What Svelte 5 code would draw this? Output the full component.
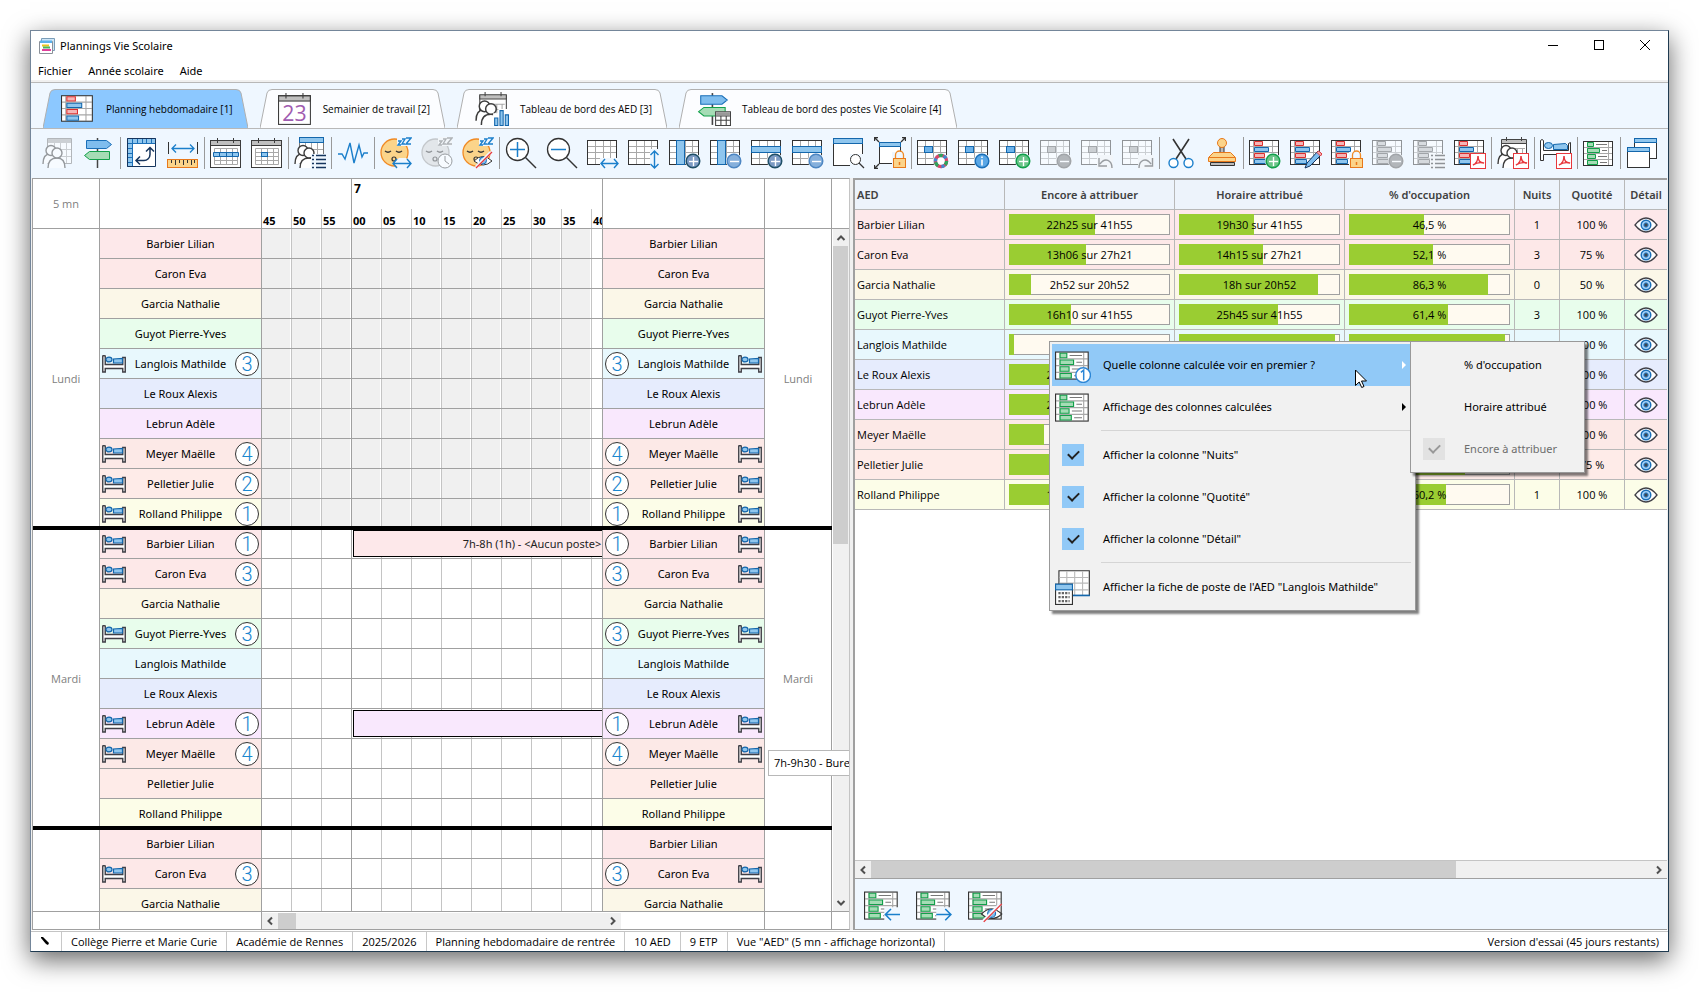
<script lang="ts">
	type Tool = { icon: string; label: string; off?: boolean };
	type Post = { from: number; minutes: number; text: string };
	type Day = { name: string; closed?: boolean; nights: Record<string, number>; posts?: Record<string, Post> };

	const people = [
		{ name: 'Barbier Lilian', color: '#fde8ea', left: '22h25 sur 41h55', leftPct: 53.5, done: '19h30 sur 41h55', donePct: 46.5, nights: 1, quota: 100 },
		{ name: 'Caron Eva', color: '#fde8e8', left: '13h06 sur 27h21', leftPct: 47.9, done: '14h15 sur 27h21', donePct: 52.1, nights: 3, quota: 75 },
		{ name: 'Garcia Nathalie', color: '#fbf7e8', left: '2h52 sur 20h52', leftPct: 13.7, done: '18h sur 20h52', donePct: 86.3, nights: 0, quota: 50 },
		{ name: 'Guyot Pierre-Yves', color: '#e8fdec', left: '16h10 sur 41h55', leftPct: 38.6, done: '25h45 sur 41h55', donePct: 61.4, nights: 3, quota: 100 },
		{ name: 'Langlois Mathilde', color: '#e8f8fd', left: '1h15 sur 41h55', leftPct: 3, done: '40h40 sur 41h55', donePct: 97, nights: 3, quota: 100 },
		{ name: 'Le Roux Alexis', color: '#e6ecfd', left: '23h10 sur 41h55', leftPct: 55.3, done: '18h45 sur 41h55', donePct: 44.7, nights: 0, quota: 100 },
		{ name: 'Lebrun Adèle', color: '#f9e8fd', left: '21h25 sur 41h55', leftPct: 51.1, done: '20h30 sur 41h55', donePct: 48.9, nights: 1, quota: 100 },
		{ name: 'Meyer Maëlle', color: '#fce9e7', left: '9h10 sur 41h55', leftPct: 21.9, done: '32h45 sur 41h55', donePct: 78.1, nights: 4, quota: 100 },
		{ name: 'Pelletier Julie', color: '#feebe8', left: '8h46 sur 31h26', leftPct: 28, done: '22h40 sur 31h26', donePct: 72, nights: 2, quota: 75 },
		{ name: 'Rolland Philippe', color: '#fcfde8', left: '16h41 sur 41h55', leftPct: 39.8, done: '25h14 sur 41h55', donePct: 60.2, nights: 1, quota: 100 }
	];

	const days: Day[] = [
		{
			name: 'Lundi',
			closed: true,
			nights: { 'Langlois Mathilde': 3, 'Meyer Maëlle': 4, 'Pelletier Julie': 2, 'Rolland Philippe': 1 }
		},
		{
			name: 'Mardi',
			nights: { 'Barbier Lilian': 1, 'Caron Eva': 3, 'Guyot Pierre-Yves': 3, 'Lebrun Adèle': 1, 'Meyer Maëlle': 4 },
			posts: {
				'Barbier Lilian': { from: 15, minutes: 60, text: '7h-8h (1h) - <Aucun poste>' },
				'Lebrun Adèle': { from: 15, minutes: 150, text: '' }
			}
		},
		{ name: '', nights: { 'Caron Eva': 3 } }
	];

	const slots = ['45', '50', '55', '00', '05', '10', '15', '20', '25', '30', '35', '40'];
	const slotWidth = 30;

	const tabs = [
		{ icon: 'sched', label: 'Planning hebdomadaire [1]' },
		{ icon: 'date', label: 'Semainier de travail [2]' },
		{ icon: 'people-chart', label: 'Tableau de bord des AED [3]' },
		{ icon: 'post-table', label: 'Tableau de bord des postes Vie Scolaire [4]' }
	];

	const toolGroups: Tool[][] = [
		[
			{ icon: 'people-grid', label: 'Vue AED', off: true },
			{ icon: 'post', label: 'Vue postes' }
		],
		[
			{ icon: 'swap', label: 'Inverser les axes' },
			{ icon: 'ruler', label: 'Échelle' }
		],
		[
			{ icon: 'cal-week', label: 'Semaine' },
			{ icon: 'cal-day', label: 'Jour' }
		],
		[{ icon: 'people-list', label: 'Liste des AED' }],
		[{ icon: 'pulse', label: 'Activité' }],
		[
			{ icon: 'nap-width', label: 'Largeur des nuits' },
			{ icon: 'nap-clock', label: 'Horaires des nuits', off: true },
			{ icon: 'nap-hide', label: 'Masquer les nuits' }
		],
		[
			{ icon: 'zoom-in', label: 'Zoom avant' },
			{ icon: 'zoom-out', label: 'Zoom arrière' },
			{ icon: 'grid-h', label: 'Ajuster en largeur' },
			{ icon: 'grid-v', label: 'Ajuster en hauteur' },
			{ icon: 'col-add', label: 'Élargir les colonnes' },
			{ icon: 'col-del', label: 'Réduire les colonnes' },
			{ icon: 'row-add', label: 'Agrandir les lignes' },
			{ icon: 'row-del', label: 'Réduire les lignes' },
			{ icon: 'win-find', label: 'Aperçu' },
			{ icon: 'win-lock', label: 'Verrouiller la taille' }
		],
		[
			{ icon: 'cell-color', label: 'Couleurs' },
			{ icon: 'cell-info', label: 'Informations' },
			{ icon: 'cell-add', label: 'Ajouter' },
			{ icon: 'cell-del', label: 'Supprimer', off: true },
			{ icon: 'cell-undo', label: 'Annuler', off: true },
			{ icon: 'cell-redo', label: 'Rétablir', off: true }
		],
		[
			{ icon: 'cut', label: 'Couper' },
			{ icon: 'stamp', label: 'Tampon' }
		],
		[
			{ icon: 'sched-add', label: 'Nouveau planning' },
			{ icon: 'sched-edit', label: 'Modifier le planning' },
			{ icon: 'sched-lock', label: 'Verrouiller le planning' },
			{ icon: 'sched-del', label: 'Supprimer le planning', off: true },
			{ icon: 'sched-list', label: 'Liste des plannings', off: true },
			{ icon: 'sched-pdf', label: 'Planning en PDF' }
		],
		[{ icon: 'people-pdf', label: 'AED en PDF' }],
		[{ icon: 'bed-pdf', label: 'Nuits en PDF' }],
		[{ icon: 'calc', label: 'Colonnes calculées' }],
		[{ icon: 'windows', label: 'Fenêtres' }]
	];

	const footTools: Tool[] = [
		{ icon: 'calc-left', label: 'Colonne précédente' },
		{ icon: 'calc-right', label: 'Colonne suivante' },
		{ icon: 'calc-hide', label: 'Masquer les colonnes' }
	];

	const status = [
		'Collège Pierre et Marie Curie',
		'Académie de Rennes',
		'2025/2026',
		'Planning hebdomadaire de rentrée',
		'10 AED',
		'9 ETP',
		'Vue "AED" (5 mn - affichage horizontal)'
	];

	let columns = $state([
		{ name: 'Nuits', shown: true },
		{ name: 'Quotité', shown: true },
		{ name: 'Détail', shown: true }
	]);

	let activeTab = $state(0);

	const percent = (n: number) => n.toFixed(1).replace('.', ',') + ' %';
</script>

{#snippet grid()}
	<g>
		<rect x="0.5" y="3.5" width="29" height="24" fill="#fff" />
		<path d="M8.5 4v23M16.5 4v23M23.5 4v23M1 9.5h28M1 15.5h28M1 21.5h28" stroke="#a8a8a8" />
		<rect x="0.5" y="3.5" width="29" height="24" stroke="#333" />
	</g>
{/snippet}

{#snippet sched()}
	<g>
		<rect x="0.5" y="3.5" width="29" height="24" fill="#fff" />
		<path d="M23.5 4v23M4.5 4v23M1 9.5h28M1 15.5h28M1 21.5h28" stroke="#a8a8a8" />
		<rect x="0.5" y="3.5" width="29" height="24" stroke="#333" />
		<path d="M5.5 4.5h8v4h-8zM5.5 16.5h10v4h-10z" fill="#f5b5b5" stroke="#dc2f2f" />
		<path d="M5.5 10.5h14v4h-14zM5.5 22.5h11v4h-11z" fill="#8fc6ee" stroke="#1467ac" />
	</g>
{/snippet}

{#snippet calc()}
	<g>
		<rect x="0.5" y="4.5" width="29" height="24" fill="#fff" />
		<path d="M4.5 5v23M25.5 5v23M1 10.5h28M1 16.5h28M1 22.5h28" stroke="#a8a8a8" />
		<rect x="0.5" y="4.5" width="29" height="24" stroke="#333" />
		<path d="M4.5 5.5h6v4h-6zM4.5 11.5h12v4h-12zM4.5 17.5h8v4h-8zM4.5 23.5h10v4h-10z" fill="#a5dcb5" stroke="#12a04a" />
		<path d="M13 7.5h11M19 13.5h5M15 19.5h9M17 25.5h7" stroke="#777" />
	</g>
{/snippet}

{#snippet crew()}
	<g stroke="#3c3c3c" stroke-width="1.4" fill="#fff">
		<path d="M1 27c0-6 2-10 7-10s6 3 6 8" />
		<circle cx="9" cy="13.5" r="5" />
		<path d="M6 31c0-7 3-10 9-10s8 4 8 10" />
		<circle cx="15" cy="16" r="5" />
	</g>
{/snippet}

{#snippet calendar()}
	<g>
		<rect x="0.5" y="3.5" width="30" height="27" fill="#fff" />
		<rect x="0.5" y="3.5" width="30" height="5" fill="#bfbfbf" stroke="#3c3c3c" />
		<rect x="0.5" y="3.5" width="30" height="27" stroke="#3c3c3c" />
		<path d="M7.5 1v5M23.5 1v5" stroke="#3c3c3c" />
	</g>
{/snippet}

{#snippet signpost()}
	<g>
		<path d="M14.5 1v30" stroke="#444" stroke-width="1.5" />
		<path d="M3.5 3.5h20l5 4-5 4h-20z" fill="#7fbdee" stroke="#1a6fb8" />
		<path d="M26.5 14.5h-20l-5 4 5 4h20z" fill="#a5dcb5" stroke="#12a04a" />
	</g>
{/snippet}

{#snippet face()}
	<g>
		<circle cx="14.5" cy="15.5" r="13.5" fill="#fbd48a" stroke="#f08a24" stroke-width="1.3" />
		<path d="M5 14q3 2.5 6 0M16 14q3 2.5 6 0" stroke="#333" stroke-width="1.3" />
		<circle cx="14" cy="22" r="2" stroke="#333" stroke-width="1.2" />
		<path d="M17 0h14v9H17z" fill="#eff7ff" />
		<path d="M18 4h3l-3 4h3M22 2h3l-3 5h3M26 1h5l-5 6h5" stroke="#1b7fcb" stroke-width="1.4" />
	</g>
{/snippet}

{#snippet badge(sign: string, fill: string, edge: string)}
	<g>
		<circle cx="24" cy="24" r="8" fill="#eff7ff" />
		<circle cx="24" cy="24" r="6.8" {fill} stroke={edge} stroke-width="1.4" />
		{#if sign === 'info'}
			<path d="M24 19.5v1.5M24 22.5v6" stroke="#fff" stroke-width="1.6" />
		{:else}
			<path d="M20 24.5h9" stroke="#fff" stroke-width="1.4" />
			{#if sign === 'plus'}
				<path d="M24.5 20v9" stroke="#fff" stroke-width="1.4" />
			{/if}
		{/if}
	</g>
{/snippet}

{#snippet padlock()}
	<g>
		<rect x="18" y="15" width="14" height="17" fill="#eff7ff" />
		<path d="M21.5 22v-4a4 4 0 0 1 8 0v4" stroke="#f08a24" stroke-width="1.3" />
		<rect x="19.5" y="21.5" width="12" height="9" fill="#fbd48a" stroke="#e8781a" />
		<path d="M25.5 25v3" stroke="#e8781a" stroke-width="1.5" />
	</g>
{/snippet}

{#snippet pdf()}
	<g>
		<rect x="16.5" y="16.5" width="15" height="15" fill="#fff" stroke="#e8383d" />
		<path d="M19 28c3-1 5-5 5-9 0 4 2 7 6 7-3-1-8 0-11 2z" stroke="#e8383d" stroke-width="1.5" />
	</g>
{/snippet}

{#snippet lines()}
	<g>
		<rect x="17" y="17" width="15" height="15" fill="#eff7ff" />
		<path d="M18 18.5h2M18 22.5h2M18 26.5h2M18 30.5h2M22 18.5h10M22 22.5h10M22 26.5h10M22 30.5h10" stroke="#15355e" stroke-width="1.5" />
	</g>
{/snippet}

{#snippet crossedEye()}
	<g>
		<path d="M12 24q8.500-9 18 0q-8.500 8-18 0z" fill="#fff" stroke="#333" />
		<circle cx="21" cy="23.5" r="3.500" fill="#7fbdee" stroke="#1a6fb8" />
		<circle cx="21" cy="23.5" r="1" fill="#333" />
		<path d="M14 30L29 15" stroke="#eff7ff" stroke-width="3" />
		<path d="M14 31L30 15" stroke="#e8383d" stroke-width="1.2" />
	</g>
{/snippet}

{#snippet icon(name: string)}
	<svg class="icon" viewBox="0 0 32 32" fill="none" aria-hidden="true">
		{#if name === 'people-grid'}
			<g>
				<path d="M5.5 1.5h24v25h-24z" fill="#fff" stroke="#777" />
				<path d="M6 2h23v4h-23z" fill="#aaa" />
				<path d="M12.5 6v20M18.5 6v20M24.5 6v20M6 12.5h23M6 19.5h23" stroke="#a8a8a8" />
			</g>
			{@render crew()}
		{:else if name === 'post' || name === 'post-table'}
			{@render signpost()}
			{#if name === 'post-table'}
				<g>
					<path d="M17.5 18.5h14v13h-14z" fill="#fff" stroke="#444" />
					<path d="M18 19h13v3h-13z" fill="#999" />
					<path d="M22.5 22v9M27.5 22v9M18 22.5h13M18 26.5h13" stroke="#444" />
				</g>
			{/if}
		{:else if name === 'swap'}
			<path d="M1.5 1.5h28v28h-28z" fill="#fff" />
			<path d="M1.5 1.5h28v5h-28zM1.5 6.5h5v23h-5z" fill="#8fc6ee" stroke="#1a6fb8" />
			<path d="M6.5 2v4M11.5 2v4M16.5 2v4M20.5 2v4M25.5 2v4M2 11.5h4M2 16.5h4M2 20.5h4M2 25.5h4" stroke="#1a6fb8" />
			<path d="M1.5 1.5h28v28h-28z" stroke="#15355e" />
			<path d="M10 23.5h8a6 6 0 0 0 6-6V11M14 19.5l-4 4 4 4M20 14.5l4-4 4 4" stroke="#15355e" stroke-width="1.5" />
		{:else if name === 'ruler'}
			<path d="M1.5 5v12M30.5 5v12" stroke="#333" />
			<path d="M5 11.5h22M9 7.5l-4 4 4 4M23 7.5l4 4-4 4" stroke="#1b7fcb" stroke-width="1.3" />
			<rect x="0.5" y="22.5" width="30" height="8" fill="#fbd48a" stroke="#e8781a" />
			<path d="M4.5 23v3M8.5 23v5M12.5 23v3M16.5 23v5M20.5 23v3M24.5 23v5M27.5 23v3" stroke="#333" />
		{:else if name === 'cal-week' || name === 'cal-day'}
			{@render calendar()}
			<path d="M4.5 11.5h23v16h-23zM10.5 11v17M16.5 11v17M22.5 11v17M4 15.5h24M4 19.5h24M4 23.5h24" stroke="#a8a8a8" />
			{#if name === 'cal-week'}
				<path d="M3.5 15.5h25v4h-25zM9.5 16v4M16.5 16v4M22.5 16v4" fill="#8fc6ee" stroke="#1467ac" />
			{:else}
				<rect x="10.5" y="15.5" width="6" height="4" fill="#8fc6ee" stroke="#1467ac" />
			{/if}
		{:else if name === 'people-list'}
			<path d="M5.5 1.5h24v25h-24z" fill="#fff" stroke="#777" />
			<path d="M11.5 6v20M17.5 6v20M23.5 6v20M6 12.5h23M6 19.5h23" stroke="#a8a8a8" />
			<rect x="5.5" y="0.5" width="24" height="5" fill="#8fc6ee" stroke="#1467ac" />
			{@render crew()}
			{@render lines()}
		{:else if name === 'pulse'}
			<path d="M1 17h4l3 5 5-16 4 20 5-18 3 12 2-4h4" stroke="#1b7fcb" stroke-width="1.4" />
		{:else if name === 'nap-width'}
			{@render face()}
			<path d="M13 26l6-5h7l6 5-6 5h-7z" fill="#eff7ff" />
			<path d="M13 26.5h18M17 22l-4 4.5 4 4.5M27 22l4 4.5-4 4.5" stroke="#1b7fcb" stroke-width="1.4" />
		{:else if name === 'nap-clock'}
			{@render face()}
			<circle cx="24" cy="24" r="7" fill="#fff" stroke="#444" />
			<path d="M24 19v5l4 3" stroke="#444" />
		{:else if name === 'nap-hide'}
			{@render face()}
			{@render crossedEye()}
		{:else if name === 'zoom-in' || name === 'zoom-out'}
			<circle cx="12.5" cy="12.5" r="11" fill="#fff" stroke="#333" stroke-width="1.3" />
			<path d="M20.5 20.5L31 31" stroke="#333" stroke-width="1.4" />
			<path d="M5 12.5h15" stroke="#1b7fcb" stroke-width="1.5" />
			{#if name === 'zoom-in'}
				<path d="M12.5 5v15" stroke="#1b7fcb" stroke-width="1.5" />
			{/if}
		{:else if name === 'grid-h'}
			{@render grid()}
			<path d="M13 21h19v10H13z" fill="#eff7ff" />
			<path d="M14 26.5h17M18 22l-4 4.5 4 4.5M27 22l4 4.5-4 4.5" stroke="#1b7fcb" stroke-width="1.4" />
		{:else if name === 'grid-v'}
			{@render grid()}
			<path d="M22 12h9v20h-9z" fill="#eff7ff" />
			<path d="M26.5 14v17M22.5 18l4-4 4 4M22.5 27l4 4 4-4" stroke="#1b7fcb" stroke-width="1.4" />
		{:else if name === 'col-add' || name === 'col-del'}
			{@render grid()}
			<rect x="7.5" y="3.5" width="8" height="24" fill="#8fc6ee" stroke="#1467ac" />
			{#if name === 'col-add'}
				{@render badge('plus', '#7d9bc4', '#1f4f66')}
			{:else}
				{@render badge('minus', '#86b0dc', '#4d86c2')}
			{/if}
		{:else if name === 'row-add' || name === 'row-del'}
			{@render grid()}
			<rect x="0.5" y="9.5" width="29" height="6" fill="#8fc6ee" stroke="#1467ac" />
			{#if name === 'row-add'}
				{@render badge('plus', '#7d9bc4', '#1f4f66')}
			{:else}
				{@render badge('minus', '#86b0dc', '#4d86c2')}
			{/if}
		{:else if name === 'win-find'}
			<rect x="0.5" y="1.5" width="29" height="27" fill="#fff" stroke="#333" />
			<rect x="0.5" y="1.5" width="29" height="5" fill="#8fc6ee" stroke="#1467ac" />
			<path d="M17 17h15v15H17z" fill="#eff7ff" />
			<circle cx="22.5" cy="22.5" r="5" fill="#fff" stroke="#333" />
			<path d="M26 26l5 5" stroke="#333" stroke-width="1.3" />
		{:else if name === 'win-lock'}
			<rect x="5.5" y="5.5" width="21" height="21" fill="#fff" stroke="#333" />
			<rect x="5.5" y="5.5" width="21" height="4" fill="#8fc6ee" stroke="#1467ac" />
			<path d="M0.5 4V0.5H4M28 0.5h3.5V4M0.5 28v3.5H4M1 1l4 4M31 1l-4 4M1 31l4-4" stroke="#333" stroke-width="1.3" />
			{@render padlock()}
		{:else if name.startsWith('cell')}
			{@render grid()}
			<rect x="7.5" y="9.5" width="8" height="6" fill="#6db3ea" stroke="#1467ac" />
			{#if name === 'cell-color'}
				<circle cx="24" cy="24" r="8" fill="#eff7ff" />
				<circle cx="24" cy="24" r="5.5" stroke="#d9486b" stroke-width="3.5" />
				<circle cx="24" cy="24" r="5.5" stroke="#2fa35c" stroke-width="3.5" stroke-dasharray="4 7.5" />
				<circle cx="24" cy="24" r="5.5" stroke="#3f8ad0" stroke-width="3.5" stroke-dasharray="3 8.5" stroke-dashoffset="-5" />
				<circle cx="24" cy="24" r="3.5" fill="#fff" />
			{:else if name === 'cell-info'}
				{@render badge('info', '#5aa7e6', '#1a6fb8')}
			{:else if name === 'cell-add'}
				{@render badge('plus', '#6cc58a', '#12a04a')}
			{:else if name === 'cell-del'}
				{@render badge('minus', '#777', '#555')}
			{:else if name === 'cell-undo'}
				<path d="M16 18h16v14H16z" fill="#eff7ff" />
				<path d="M31 31c0-8-7-11-12-4M18 21v8h8" stroke="#444" stroke-width="1.4" />
			{:else}
				<path d="M16 18h16v14H16z" fill="#eff7ff" />
				<path d="M17 31c0-8 7-11 12-4M30.5 21v8h-8" stroke="#444" stroke-width="1.4" />
			{/if}
		{:else if name === 'cut'}
			<path d="M8 2l13 20M24 2L11 22" stroke="#333" stroke-width="1.6" />
			<circle cx="8.5" cy="26" r="4.5" fill="#fff" stroke="#1b7fcb" stroke-width="1.4" />
			<circle cx="23.5" cy="26" r="4.5" fill="#fff" stroke="#1b7fcb" stroke-width="1.4" />
		{:else if name === 'stamp'}
			<path d="M4.5 25.5h24v3h-24z" fill="#bbb" stroke="#333" />
			<path d="M14 10h4v7h-4z" fill="#bbb" stroke="#333" />
			<path d="M2.5 24.5v-4l5-5h17l5 5v4zM3 20.5h26" fill="#fbd48a" stroke="#e8781a" />
			<circle cx="16" cy="6" r="4.5" fill="#fbd48a" stroke="#e8781a" />
		{:else if name.startsWith('sched')}
			{@render sched()}
			{#if name === 'sched-add'}
				{@render badge('plus', '#6cc58a', '#12a04a')}
			{:else if name === 'sched-edit'}
				<path d="M15 31l2-5L28 14l4 3-12 12z" fill="#7fbdee" stroke="#15355e" />
				<path d="M27 15.5l1.5-1.5 3.5 3-1.5 2z" fill="#f5b5b5" stroke="#e8383d" />
			{:else if name === 'sched-lock'}
				{@render padlock()}
			{:else if name === 'sched-del'}
				{@render badge('minus', '#777', '#555')}
			{:else if name === 'sched-list'}
				{@render lines()}
			{:else if name === 'sched-pdf'}
				{@render pdf()}
			{/if}
		{:else if name === 'people-pdf' || name === 'people-chart'}
			<path d="M4.5 3.5h25v22h-25z" fill="#fff" stroke="#444" />
			<path d="M20.5 12v12M25.5 12v12M16 11.5h12M16 16.5h12" stroke="#a8a8a8" />
			<path d="M4.5 2.5h25v4h-25z" fill="#bfbfbf" stroke="#444" />
			<path d="M9.5 0v4M24.5 0v4" stroke="#444" />
			{@render crew()}
			{#if name === 'people-pdf'}
				{@render pdf()}
			{:else}
				<path d="M17 20h5v-4h10v16H17z" fill="#fff" />
				<path d="M18.5 24.5h3v7h-3zM23.5 17.5h3v14h-3zM28.5 21.5h3v10h-3z" fill="#8fc6ee" stroke="#1467ac" />
			{/if}
		{:else if name === 'bed-pdf'}
			<path d="M0.5 23.5v-20l1.5-1 1.5 1v10h25v-7l2-1v18h-2v-6h-25v6z" fill="#fff" stroke="#333" />
			<ellipse cx="8.5" cy="8.5" rx="4" ry="3" fill="#8fc6ee" stroke="#1467ac" />
			<path d="M13.5 12.5v-5l12-1 2 2v4z" fill="#8fc6ee" stroke="#1467ac" />
			{@render pdf()}
		{:else if name === 'windows'}
			<rect x="8.5" y="1.5" width="22" height="20" fill="#fff" stroke="#333" />
			<rect x="8.5" y="1.5" width="22" height="4" fill="#8fc6ee" stroke="#1467ac" />
			<rect x="1.5" y="10.5" width="22" height="20" fill="#fff" stroke="#333" />
			<rect x="1.5" y="10.5" width="22" height="4" fill="#8fc6ee" stroke="#1467ac" />
		{:else if name === 'date'}
			{@render calendar()}
			<text x="15.5" y="27" text-anchor="middle" font-size="20" font-family="Open Sans, sans-serif" fill="#a05cb0">23</text>
		{:else if name === 'sheet'}
			<path d="M3.5 1.5h27v22h-27z" fill="#fff" stroke="#333" />
			<path d="M10.5 2v21M17.5 2v21M24.5 2v21M4 7.5h26M4 12.5h26M4 18.5h26" stroke="#bbb" />
			<path d="M16 23.5h15" stroke="#1467ac" stroke-width="1.5" />
			<rect x="0.5" y="13.5" width="15" height="18" fill="#fff" stroke="#333" />
			<rect x="0.5" y="13.5" width="15" height="5" fill="#8fc6ee" stroke="#1467ac" />
			<path d="M3 21.5h10M3 25h10M3 28.5h10" stroke="#666" stroke-width="2" stroke-dasharray="2 1" />
		{:else if name.startsWith('calc')}
			{@render calc()}
			{#if name === 'calc-left'}
				<path d="M18 18h14v12H18z" fill="#eff7ff" />
				<path d="M32 24.5H19M24 19.5l-5 5 5 5" stroke="#1b7fcb" stroke-width="1.4" />
			{:else if name === 'calc-right'}
				<path d="M18 18h14v12H18z" fill="#eff7ff" />
				<path d="M18 24.5h13M26 19.5l5 5-5 5" stroke="#1b7fcb" stroke-width="1.4" />
			{:else if name === 'calc-hide'}
				{@render crossedEye()}
			{:else if name === 'calc-first'}
				<circle cx="25" cy="25" r="6.5" fill="#fff" stroke="#2c86d6" stroke-width="1.3" />
				<path d="M23 22.5l2.5-2v9" stroke="#2c86d6" stroke-width="1.3" />
			{/if}
		{/if}
	</svg>
{/snippet}

{#snippet bed()}
	<svg class="bed" viewBox="0 0 24 18" fill="none" aria-hidden="true">
		<path d="M0.75 17V1l1-.5 1.5.5v8.5h17.5V2.5h2.5V17h-2.5v-3.5H3.25V17z" fill="#fff" stroke="#3f3f46" stroke-width="1.4" />
		<ellipse cx="7" cy="4.5" rx="3" ry="2.4" fill="#8fc6ee" stroke="#1467ac" stroke-width="1.2" />
		<path d="M11.5 8V4l9-.5V8z" fill="#8fc6ee" stroke="#1467ac" stroke-width="1.2" />
	</svg>
{/snippet}

{#snippet eye()}
	<svg class="eye" viewBox="0 0 24 16" fill="none" aria-hidden="true">
		<path d="M1 8Q12-6 23 8Q12 22 1 8z" fill="#fff" stroke="#3f3f46" stroke-width="1.3" />
		<circle cx="12" cy="8" r="4.8" fill="#a8d2f5" stroke="#1a6fb8" stroke-width="1.4" />
		<circle cx="12" cy="8" r="2.2" fill="#3c4650" stroke="#2c86d6" />
	</svg>
{/snippet}

{#snippet chevron(turn: string)}
	<svg class="chevron {turn}" viewBox="0 0 10 10" fill="none" aria-hidden="true">
		<path d="M1.5 7L5 3.5 8.5 7" stroke="#505050" stroke-width="2" />
	</svg>
{/snippet}

{#snippet person(name: string, color: string, night: number | undefined, mirrored: boolean)}
	<div class="person" class:mirrored style:background={color}>
		<span class="mark">{#if night}{@render bed()}{/if}</span>
		<span class="who">{name}</span>
		<span class="mark">
			{#if night}<b class="night">{night}</b>{/if}
		</span>
	</div>
{/snippet}

{#snippet gauge(text: string, value: number)}
	<div class="gauge">
		<div class="fill" style:width="{value}%"></div>
		<span>{text}</span>
	</div>
{/snippet}

<div class="desktop">
	<div class="window">
		<header class="titlebar">
			<svg class="logo" viewBox="0 0 16 16" fill="none" aria-hidden="true">
				<path d="M2.5 0.5h13v12h-13z" fill="#cfe6f7" stroke="#7a9db8" />
				<path d="M0.5 3.5h13v12h-13z" fill="#fff" stroke="#8a9099" />
				<path d="M1 2.5h12v2.5H1z" fill="#5ab0ea" />
				<path d="M3 7.5h7" stroke="#e8c51c" stroke-width="2" />
				<path d="M4 9.5h7" stroke="#4ab35c" stroke-width="2" />
				<path d="M3 12h9" stroke="#e0409a" stroke-width="2" />
			</svg>
			<h1>Plannings Vie Scolaire</h1>
			<div class="controls">
				<button type="button" aria-label="Réduire"><svg viewBox="0 0 10 10"><path d="M0 5.5h10" stroke="#000" /></svg></button>
				<button type="button" aria-label="Agrandir"><svg viewBox="0 0 10 10"><path d="M0.5 0.5h9v9h-9z" fill="none" stroke="#000" /></svg></button>
				<button type="button" aria-label="Fermer"><svg viewBox="0 0 10 10"><path d="M0 0l10 10M10 0L0 10" stroke="#000" /></svg></button>
			</div>
		</header>

		<nav class="menubar">
			<button type="button">Fichier</button>
			<button type="button">Année scolaire</button>
			<button type="button">Aide</button>
		</nav>

		<div class="tabs" role="tablist">
			{#each tabs as tab, i (tab.label)}
				<button type="button" role="tab" class="tab" class:active={i === activeTab} aria-selected={i === activeTab} onclick={() => (activeTab = i)}>
					<svg class="edge" viewBox="0 0 12 39" aria-hidden="true"><path d="M0 39L7 4Q8 .5 12 .5V39z" /><path class="rim" d="M0 39L7 4Q8 .5 12 .5" /></svg>
					<span class="tab-body">{@render icon(tab.icon)}{tab.label}</span>
					<svg class="edge" viewBox="0 0 12 39" aria-hidden="true"><path d="M12 39L5 4Q4 .5 0 .5V39z" /><path class="rim" d="M12 39L5 4Q4 .5 0 .5" /></svg>
				</button>
			{/each}
		</div>

		<div class="toolbar" role="toolbar">
			{#each toolGroups as group}
				<div class="group">
					{#each group as tool (tool.icon)}
						<button type="button" class="tool" aria-label={tool.label} disabled={tool.off}>{@render icon(tool.icon)}</button>
					{/each}
				</div>
			{/each}
		</div>

		<div class="panes">
			<section class="planner">
				<div class="cols head">
					<div class="cell muted">5 mn</div>
					<div class="cell"></div>
					<div class="cell scale">
						{#each slots as slot, i}
							<div class="slot" class:before-hour={slots[i + 1] === '00'}>
								<b class="hour">{slot === '00' ? '7' : ''}</b>
								<b class="minute">{slot}</b>
							</div>
						{/each}
					</div>
					<div class="cell"></div>
					<div class="cell"></div>
					<div></div>
				</div>

				<div class="body">
					<div class="days">
						{#each days as day}
							<div class="day">
								<div class="cell muted">{day.name}</div>
								<div class="cell stack">
									{#each people as p (p.name)}
										{@render person(p.name, p.color, day.nights[p.name], false)}
									{/each}
								</div>
								<div class="cell stack">
									{#each people as p (p.name)}
										{@const post = day.posts?.[p.name]}
										<div class="lane" class:closed={day.closed}>
											{#if post}
												<div
													class="post"
													style:margin-left="{(post.from / 5) * slotWidth + 1}px"
													style:width="{(post.minutes / 5) * slotWidth - 2}px"
													style:background={p.color}
												>
													{post.text}
												</div>
											{/if}
										</div>
									{/each}
								</div>
								<div class="cell stack">
									{#each people as p (p.name)}
										{@render person(p.name, p.color, day.nights[p.name], true)}
									{/each}
								</div>
								<div class="cell muted">{day.name}</div>
							</div>
						{/each}
					</div>
					<div class="vscroll">
						<button type="button" aria-label="Monter">{@render chevron('up')}</button>
						<div class="track"><div class="thumb"></div></div>
						<button type="button" aria-label="Descendre">{@render chevron('down')}</button>
					</div>
					<div class="hint">7h-9h30 - Bureau</div>
				</div>

				<div class="cols foot">
					<div class="cell"></div>
					<div class="cell"></div>
					<div class="hscroll">
						<button type="button" aria-label="Gauche">{@render chevron('left')}</button>
						<div class="track"><div class="thumb"></div></div>
						<button type="button" aria-label="Droite">{@render chevron('right')}</button>
					</div>
					<div class="cell"></div>
					<div class="cell"></div>
					<div></div>
				</div>
			</section>

			<section class="summary">
				<div class="table-area">
					<table>
						<colgroup>
							<col class="c-name" /><col /><col /><col /><col class="c-nights" /><col class="c-quota" /><col class="c-detail" />
						</colgroup>
						<thead>
							<tr>
								<th>AED</th>
								<th>Encore à attribuer</th>
								<th>Horaire attribué</th>
								<th>% d'occupation</th>
								<th>Nuits</th>
								<th>Quotité</th>
								<th>Détail</th>
							</tr>
						</thead>
						<tbody>
							{#each people as p (p.name)}
								<tr style:background={p.color}>
									<td>{p.name}</td>
									<td>{@render gauge(p.left, p.leftPct)}</td>
									<td>{@render gauge(p.done, p.donePct)}</td>
									<td>{@render gauge(percent(p.donePct), p.donePct)}</td>
									<td>{p.nights}</td>
									<td>{p.quota} %</td>
									<td><button type="button" class="look" aria-label="Détail de {p.name}">{@render eye()}</button></td>
								</tr>
							{/each}
						</tbody>
					</table>
				</div>
				<div class="hscroll wide">
					<button type="button" aria-label="Gauche">{@render chevron('left')}</button>
					<div class="track"><div class="thumb"></div></div>
					<button type="button" aria-label="Droite">{@render chevron('right')}</button>
				</div>
				<div class="actions">
					{#each footTools as tool (tool.icon)}
						<button type="button" aria-label={tool.label}>{@render icon(tool.icon)}</button>
					{/each}
				</div>
			</section>
		</div>

		<footer class="status">
			<span class="state">
				<svg viewBox="0 0 10 10" aria-hidden="true"><path d="M1 1l2 0 6 6-1 2-2-1-5-6z" fill="#000" /></svg>
			</span>
			{#each status as item}
				<span>{item}</span>
			{/each}
			<span class="licence">Version d'essai (45 jours restants)</span>
		</footer>

		<div class="popup menu" role="menu">
			<button type="button" role="menuitem" class="item current">
				<span class="gutter">{@render icon('calc-first')}</span>
				<span class="text">Quelle colonne calculée voir en premier ?</span>
				<span class="arrow"></span>
			</button>
			<button type="button" role="menuitem" class="item">
				<span class="gutter">{@render icon('calc')}</span>
				<span class="text">Affichage des colonnes calculées</span>
				<span class="arrow"></span>
			</button>
			<hr />
			{#each columns as column (column.name)}
				<label class="item">
					<span class="gutter"><input type="checkbox" bind:checked={column.shown} /></span>
					<span class="text">Afficher la colonne "{column.name}"</span>
				</label>
			{/each}
			<hr />
			<button type="button" role="menuitem" class="item">
				<span class="gutter">{@render icon('sheet')}</span>
				<span class="text">Afficher la fiche de poste de l'AED "Langlois Mathilde"</span>
			</button>
		</div>

		<div class="popup submenu" role="menu">
			<button type="button" role="menuitem" class="item"><span class="gutter"></span><span class="text">% d'occupation</span></button>
			<button type="button" role="menuitem" class="item"><span class="gutter"></span><span class="text">Horaire attribué</span></button>
			<label class="item disabled">
				<span class="gutter"><input type="checkbox" checked disabled /></span>
				<span class="text">Encore à attribuer</span>
			</label>
		</div>

		<svg class="cursor" viewBox="0 0 12 19" aria-hidden="true">
			<path d="M.5 1v15.5l3.7-3.5 2.5 5.5 2.3-1-2.5-5.5h5z" fill="#fff" stroke="#000" />
		</svg>
	</div>
</div>

<style>
	:global(body) {
		background: #fff;
	}

	.desktop,
	.desktop :global(*) {
		box-sizing: border-box;
	}

	.desktop {
		--line: #a0a0a0;
		--line-soft: #c4c4c4;
		--bar: #eff7ff;
		height: 100vh;
		padding: 30px 30px 40px;
		overflow: hidden;
		font-family: 'Open Sans', 'Noto Sans', sans-serif;
		font-size: 11px;
		line-height: 16px;
		color: #000;
	}

	button {
		padding: 0;
		border: 0;
		background: none;
		font: inherit;
		color: inherit;
	}

	.window {
		position: relative;
		display: flex;
		flex-direction: column;
		height: 100%;
		border: 1px solid #1f3a50;
		border-top-color: #74869a;
		border-left-color: #74869a;
		background: #fff;
		box-shadow: 0 8px 24px rgba(0, 0, 0, 0.6);
	}

	.titlebar {
		display: flex;
		align-items: center;
		height: 30px;
		padding-left: 8px;
	}

	.logo {
		width: 16px;
		height: 16px;
	}

	h1 {
		flex: 1;
		margin: 0 0 0 5px;
		font-family: 'Noto Sans', sans-serif;
		font-size: 11px;
		font-weight: 400;
	}

	.controls {
		display: flex;
	}

	.controls button {
		width: 46px;
		height: 30px;
	}

	.controls svg {
		width: 10px;
		height: 10px;
		shape-rendering: crispEdges;
	}

	.menubar {
		display: flex;
		gap: 16px;
		height: 21px;
		padding-left: 7px;
		font-family: 'Noto Sans', sans-serif;
		border-bottom: 2px solid #f0f0f0;
	}

	.tabs {
		display: flex;
		align-items: flex-end;
		gap: 12px;
		height: 47px;
		padding-left: 12px;
		border-top: 1px solid #b8b8b8;
		border-bottom: 1px solid #b8b8b8;
		background: var(--bar);
	}

	.tab {
		--tab: #fcfdff;
		display: flex;
		height: 39px;
		font-size: 10px;
	}

	.tab.active {
		--tab: #8cc8ff;
	}

	.edge {
		width: 12px;
		height: 39px;
		fill: var(--tab);
	}

	.rim {
		fill: none;
		stroke: #b0b0b0;
	}

	.tab-body {
		display: flex;
		align-items: center;
		gap: 11px;
		height: 39px;
		padding: 0 3px 0 6px;
		border-top: 1px solid #b0b0b0;
		background: var(--tab);
	}

	.tab-body .icon {
		width: 34px;
		height: 34px;
	}

	.icon {
		width: 32px;
		height: 32px;
		flex: none;
	}

	.toolbar {
		display: flex;
		height: 49px;
		padding: 8px 0 0 7px;
		background: var(--bar);
	}

	.group {
		display: flex;
		height: 32px;
	}

	.group + .group {
		padding-left: 1px;
		border-left: 1px solid #999;
	}

	.tool {
		width: 41px;
		height: 32px;
		padding-left: 4px;
		text-align: left;
	}

	.tool:disabled {
		filter: grayscale(1);
		opacity: 0.5;
	}

	.panes {
		flex: 1;
		display: grid;
		grid-template-rows: minmax(0, 1fr);
		grid-template-columns: minmax(0, 818fr) minmax(0, 814fr);
		gap: 3px;
		min-height: 0;
		padding: 0 1px;
		background: #f0f0f0;
	}

	.planner {
		display: grid;
		grid-template-rows: 50px minmax(0, 1fr) 17px;
		min-width: 0;
		border: 1px solid var(--line);
		border-right-color: var(--line-soft);
		background: #fff;
	}

	.cols {
		display: grid;
		grid-template-columns: 67px 162px minmax(0, 1fr) 162px 67px 17px;
	}

	.cell {
		min-width: 0;
		border-right: 1px solid var(--line);
	}

	.muted {
		display: flex;
		align-items: center;
		justify-content: center;
		color: #808080;
	}

	.head {
		border-bottom: 1px solid var(--line);
	}

	.scale {
		display: flex;
		overflow: hidden;
	}

	.slot {
		flex: none;
		display: flex;
		flex-direction: column;
		justify-content: space-between;
		width: 30px;
	}

	.hour {
		height: 16px;
		padding: 2px 0 0 2px;
		font-size: 12px;
	}

	.minute {
		height: 19px;
		padding: 4px 0 0 1px;
		border-right: 1px solid var(--line-soft);
		line-height: 16px;
	}

	.before-hour {
		border-right: 1px solid var(--line);
	}

	.before-hour .minute {
		border-right: 0;
	}

	.body {
		position: relative;
		display: grid;
		grid-template-rows: minmax(0, 1fr);
		grid-template-columns: minmax(0, 1fr) 17px;
		overflow: hidden;
		border-bottom: 1px solid var(--line);
	}

	.day {
		position: relative;
		display: grid;
		grid-template-columns: 67px 162px minmax(0, 1fr) 162px 67px;
	}

	/* heavy rule straddling the last row line of the day */
	.day::after {
		content: '';
		position: absolute;
		right: 0;
		bottom: -1px;
		left: 0;
		z-index: 1;
		height: 4px;
		background: #000;
	}

	.stack {
		overflow: hidden;
	}

	.person {
		display: flex;
		align-items: center;
		height: 30px;
		padding: 0 2px;
		border-bottom: 1px solid var(--line);
	}

	.person.mirrored {
		flex-direction: row-reverse;
	}

	.mark {
		display: flex;
		width: 24px;
	}

	.who {
		flex: 1;
		font-family: 'Noto Sans', sans-serif;
		text-align: center;
		white-space: nowrap;
	}

	.bed {
		width: 24px;
		height: 18px;
	}

	.night {
		width: 24px;
		height: 24px;
		border: 1px solid #333;
		border-radius: 50%;
		background: #fff;
		color: #1b87d0;
		font-family: Roboto, sans-serif;
		font-size: 20px;
		font-weight: 300;
		line-height: 22px;
		text-align: center;
	}

	.lane {
		height: 30px;
		padding-top: 1px;
		border-bottom: 1px solid var(--line);
		background:
			linear-gradient(var(--line), var(--line)) 89px 0 / 1px 100% no-repeat,
			repeating-linear-gradient(to right, #fff 0 29px, var(--line-soft) 29px 30px);
	}

	.lane.closed {
		background:
			linear-gradient(var(--line), var(--line)) 89px 0 / 1px 100% no-repeat,
			repeating-linear-gradient(to right, #f0f0f0 0 28px, #fff 28px 29px, var(--line-soft) 29px 30px) 0 0 / 330px 100% no-repeat,
			#fff;
	}

	.post {
		height: 27px;
		border: 1px solid #000;
		font-family: 'Noto Sans', sans-serif;
		line-height: 26px;
		text-align: center;
		color: #222;
	}

	.vscroll,
	.hscroll {
		display: flex;
		background: #f0f0f0;
	}

	.vscroll {
		flex-direction: column;
		margin-left: 1px;
	}

	.vscroll button,
	.hscroll button {
		display: flex;
		align-items: center;
		justify-content: center;
		flex: none;
		width: 16px;
		height: 17px;
	}

	.track {
		flex: 1;
	}

	.thumb {
		background: #cdcdcd;
	}

	.vscroll .thumb {
		width: 15px;
		height: 46%;
	}

	.hscroll .thumb {
		width: 18px;
		height: 100%;
	}

	.chevron {
		width: 10px;
		height: 10px;
	}

	.chevron.down {
		transform: rotate(180deg);
	}

	.chevron.left {
		transform: rotate(-90deg);
	}

	.chevron.right {
		transform: rotate(90deg);
	}

	.hint {
		position: absolute;
		right: 0;
		top: 521px;
		z-index: 1;
		width: 81px;
		height: 26px;
		padding-left: 5px;
		overflow: hidden;
		border: 1px solid #b8b8b8;
		border-right: 0;
		background: #fff;
		line-height: 24px;
		white-space: nowrap;
	}

	.foot .hscroll {
		z-index: 1;
		margin: 1px -18px 0 0;
		align-items: stretch;
	}

	.foot .hscroll button {
		height: 16px;
	}

	.summary {
		display: flex;
		flex-direction: column;
		min-width: 0;
		border: 2px solid var(--line);
		border-width: 2px 0 0 2px;
		background: #fff;
	}

	.table-area {
		flex: 1;
		min-height: 0;
		overflow: hidden;
	}

	table {
		width: 100%;
		table-layout: fixed;
		border-collapse: separate;
		border-spacing: 0;
	}

	.c-name {
		width: 150px;
	}

	.c-nights {
		width: 45px;
	}

	.c-quota {
		width: 65px;
	}

	.c-detail {
		width: 42px;
	}

	th,
	td {
		height: 30px;
		padding: 0 4px;
		border: 0 solid #b8b8b8;
		border-width: 0 1px 1px 0;
		text-align: center;
		white-space: nowrap;
	}

	th {
		padding: 0;
		background: #edf3fb;
		color: #404040;
		font-family: 'Noto Sans', sans-serif;
		font-weight: 600;
	}

	th:first-child,
	td:first-child {
		padding-left: 2px;
		text-align: left;
	}

	th:last-child,
	td:last-child {
		border-right: 0;
	}

	.gauge {
		position: relative;
		height: 21px;
		background: #fffaf0;
		box-shadow: inset 0 0 0 1px var(--line);
		line-height: 22px;
	}

	.gauge span {
		position: relative;
	}

	.fill {
		position: absolute;
		inset: 0 auto 0 0;
		background: #9acd32;
	}

	.look {
		display: block;
		margin: 0 auto;
	}

	.eye {
		display: block;
		width: 24px;
		height: 16px;
	}

	.hscroll.wide {
		height: 19px;
		border-top: 1px solid var(--line-soft);
		border-bottom: 1px solid var(--line);
	}

	.wide .thumb {
		width: 75%;
	}

	.actions {
		display: flex;
		gap: 16px;
		height: 51px;
		padding: 8px 9px 0;
		border-bottom: 1px solid var(--line);
		background: var(--bar);
	}

	.actions button,
	.actions .icon {
		width: 36px;
		height: 36px;
	}

	.status {
		display: flex;
		height: 20px;
		margin-top: 1px;
		border-top: 1px solid var(--line-soft);
		line-height: 19px;
	}

	.status span {
		padding: 0 9px;
		border-right: 1px solid #c8c8c8;
		white-space: nowrap;
	}

	.status .state {
		width: 31px;
	}

	.state svg {
		width: 10px;
		height: 10px;
	}

	.status .licence {
		margin-left: auto;
		border: 0;
	}

	.popup {
		position: absolute;
		top: 310px;
		z-index: 2;
		display: flex;
		flex-direction: column;
		padding: 2px;
		border: 1px solid #999;
		background: #f1f1f1;
		box-shadow: 3px 3px 2px rgba(0, 0, 0, 0.5);
		font-family: 'Noto Sans', sans-serif;
	}

	.menu {
		left: 1018px;
		width: 367px;
	}

	.submenu {
		left: 1379px;
		width: 175px;
	}

	.item {
		display: flex;
		align-items: center;
		height: 42px;
		text-align: left;
	}

	.item.current {
		background: #91c9f7;
	}

	.gutter {
		display: flex;
		align-items: center;
		justify-content: center;
		width: 42px;
	}

	.text {
		flex: 1;
		padding-left: 9px;
		white-space: nowrap;
	}

	.gutter .icon {
		width: 36px;
		height: 36px;
	}

	.arrow {
		margin-right: 7px;
		border: 4px solid transparent;
		border-right: 0;
		border-left-color: #000;
	}

	.current .arrow {
		border-left-color: #fff;
	}

	hr {
		width: calc(100% - 51px);
		height: 1px;
		margin: 2px 0 3px 49px;
		border: 0;
		background: #d5d5d5;
	}

	input[type='checkbox'] {
		appearance: none;
		display: flex;
		align-items: center;
		justify-content: center;
		width: 22px;
		height: 22px;
		margin: 0;
		background: #91c9f7;
	}

	input[type='checkbox']:checked::before {
		content: '';
		width: 9px;
		height: 5px;
		margin-bottom: 3px;
		border: solid #222;
		border-width: 0 0 2px 2px;
		transform: rotate(-45deg);
	}

	input[type='checkbox']:disabled {
		background: #e2e2e2;
	}

	input[type='checkbox']:disabled::before {
		border-color: #999;
	}

	.disabled {
		color: #6d6d6d;
	}

	.cursor {
		position: absolute;
		top: 338px;
		left: 1324px;
		z-index: 3;
		width: 12px;
		height: 19px;
	}
</style>
